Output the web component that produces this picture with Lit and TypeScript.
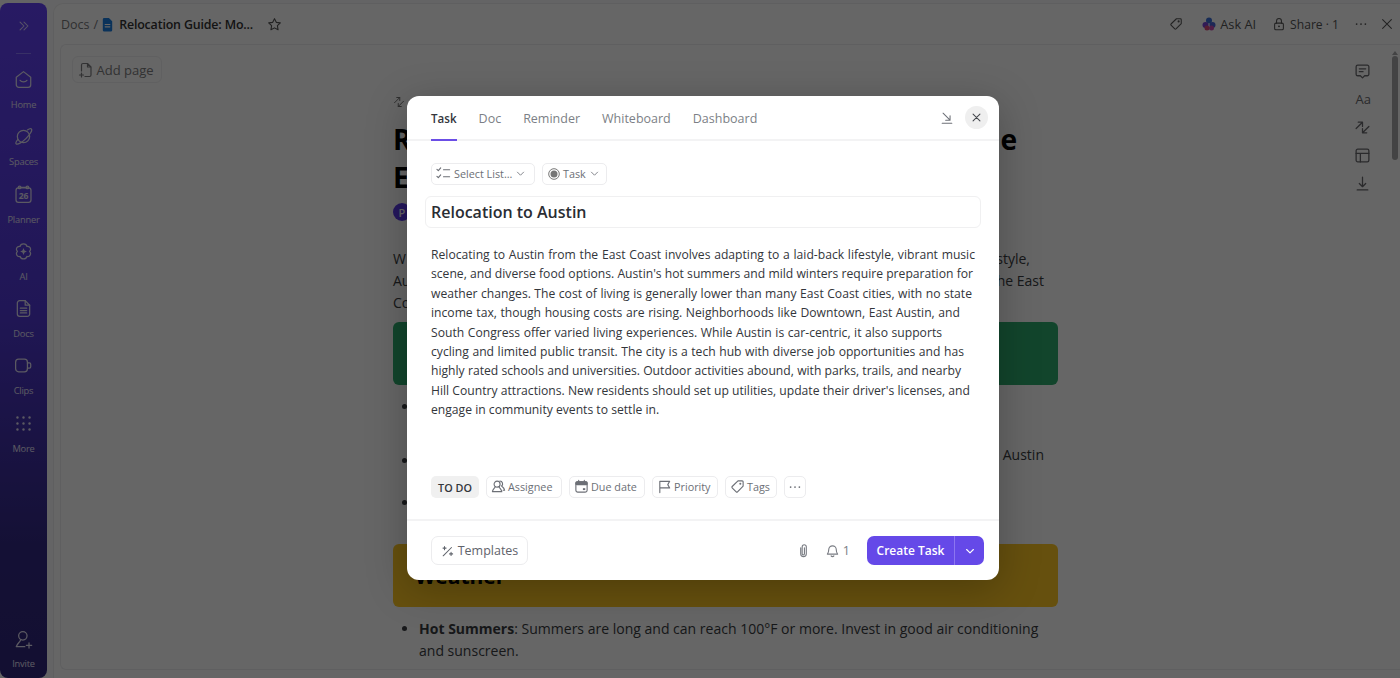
import { LitElement, html, css, svg } from "lit";
import { customElement } from "lit/decorators.js";
import { styleMap } from "lit/directives/style-map.js";

const ic = (body: unknown, size = 16, cls = "") => html`<svg class="ic ${cls}" width=${size} height=${size} viewBox="0 0 16 16" fill="none" stroke="currentColor" stroke-width="1.2" stroke-linecap="round" stroke-linejoin="round">${body}</svg>`;

const navIcons: Record<string, unknown> = {
  Home: svg`<path d="M2.500 6.200 8 2l5.500 4.200v5.800a2 2 0 0 1-2 2h-7a2 2 0 0 1-2-2z" stroke-width=".95"/><path d="M5.400 8.600c1.200 1.600 4 1.600 5.200 0" stroke-width=".95"/>`,
  Spaces: svg`<g stroke-width=".95"><circle cx="8" cy="8" r="4.700"/><path d="M3.800 10.200C2.400 11.800 1.800 13 2.400 13.600c1 1 4.400-1 7.600-4.200s5-6.200 4-7.200c-.5-.5-1.600-.2-3 .8"/></g>`,
  Planner: svg`<g stroke-width=".95"><rect x="2.300" y="3" width="11.400" height="11" rx="1.800"/><circle cx="5" cy="2.600" r="1"/><circle cx="11" cy="2.600" r="1"/><path d="M6 2.600h4"/></g><text x="8" y="11.700" text-anchor="middle" font-size="6.500" font-weight="700" fill="currentColor" stroke="none" font-family="Open Sans, sans-serif">26</text>`,
  AI: svg`<path stroke-width=".95" d="M8 2.200c1.500 0 2.400.9 2.600 1.900 1.500-.2 2.800.8 2.800 2.200 0 .7-.4 1.200-.8 1.600.4.400.8 1 .8 1.700 0 1.500-1.300 2.400-2.800 2.200-.3 1-1.100 1.900-2.600 1.900s-2.300-.9-2.600-1.900c-1.500.2-2.800-.7-2.800-2.200 0-.7.4-1.300.8-1.700-.4-.4-.8-.9-.8-1.600 0-1.400 1.300-2.400 2.800-2.200.2-1 1.100-1.900 2.600-1.900z"/><path fill="currentColor" stroke="none" d="M8 5.400 8.800 7.200 10.600 8 8.800 8.800 8 10.600 7.200 8.800 5.400 8 7.200 7.200z"/>`,
  Docs: svg`<g stroke-width=".95"><path d="M3.300 3.800a1.800 1.800 0 0 1 1.800-1.800h4.200l3.400 3.500v6.700a1.800 1.800 0 0 1-1.800 1.800H5.100a1.800 1.800 0 0 1-1.800-1.800z"/><path d="M9.300 2v3.500h3.400M5.600 7.800h4.800M5.600 9.600h4.800M5.600 11.400h4.800"/></g>`,
  Clips: svg`<g stroke-width=".95"><rect x="2" y="3.200" width="9" height="9.600" rx="2.300"/><path d="M11 6h1.500a1 1 0 0 1 1 1v2a1 1 0 0 1-1 1H11"/></g>`,
  More: svg`<g fill="currentColor" stroke="none">${[3.400, 8, 12.600].flatMap((x) => [3.400, 8, 12.600].map((y) => svg`<circle cx=${x} cy=${y} r=".9"/>`))}</g>`,
};

const nav = ["Home", "Spaces", "Planner", "AI", "Docs", "Clips", "More"];

const descriptionLines: [string, number][] = [
  ["Relocating to Austin from the East Coast involves adapting to a laid-back lifestyle, vibrant music", 544],
  ["scene, and diverse food options. Austin's hot summers and mild winters require preparation for", 542],
  ["weather changes. The cost of living is generally lower than many East Coast cities, with no state", 541],
  ["income tax, though housing costs are rising. Neighborhoods like Downtown, East Austin, and", 529],
  ["South Congress offer varied living experiences. While Austin is car-centric, it also supports", 511],
  ["cycling and limited public transit. The city is a tech hub with diverse job opportunities and has", 533],
  ["highly rated schools and universities. Outdoor activities abound, with parks, trails, and nearby", 530],
  ["Hill Country attractions. New residents should set up utilities, update their driver's licenses, and", 539],
  ["engage in community events to settle in.", 232],
];

@customElement("app-root")
export class AppRoot extends LitElement {
  static styles = css`
    :host { display: block; position: relative; width: 1400px; height: 678px; overflow: hidden; background: #fff; font-family: "Open Sans", "Noto Sans", sans-serif; color: #1f2126; }
    .ic { display: block; flex: none; }
    .shell { display: flex; height: 678px; padding-top: 3px; box-sizing: border-box; background: #fbfbfc; }
    .sidebar { width: 47px; flex: none; border-radius: 8px; background: linear-gradient(180deg, #6443f8 0%, #5239d6 45%, #342a86 80%, #30267c 100%); color: #fff; display: flex; flex-direction: column; align-items: center; }
    .chev { height: 46px; display: flex; align-items: center; color: #d8d0ff; }
    .sep { width: 15px; height: 1px; background: #8d78ff; margin: 4px 0 9px; }
    .nav { flex: none; height: 57.3px; display: flex; flex-direction: column; align-items: center; gap: 9px; color: #e4e0f5; }
    .nav .ic { margin-top: 6px; }
    .nav span { font-size: 9.300px; line-height: 12px; letter-spacing: -0.2px; font-weight: 500; }
    .grow { flex: 1; }
    .invite { height: 42px; margin-bottom: 7px; gap: 8px; }
    .invite .ic { margin-top: 0; }

    .main { flex: 1; margin-left: 6px; border: 1px solid #eeeef0; border-right: none; border-bottom: none; border-radius: 10px 0 0 0; display: flex; flex-direction: column; min-width: 0; background: #fff; }
    .topbar { height: 40px; flex: none; display: flex; align-items: center; padding: 0 6px 0 7px; font-size: 12.500px; color: #77787c; gap: 4px; }
    .crumb-title { color: #333; font-weight: 600; font-size: 12.400px; letter-spacing: -0.15px; }
    .doc-ico { color: #1a7ee0; margin-left: -2px; }
    .star { margin-left: 10px; color: #555; }
    .top-right { margin-left: auto; display: flex; align-items: center; color: #555; font-size: 12.800px; }
    .ask { display: flex; align-items: center; gap: 4px; margin-left: 19px; }
    .share { display: flex; align-items: center; gap: 4px; margin-left: 16px; font-size: 12.100px; }
    .dots { margin-left: 15px; }
    .xclose { margin-left: 12px; }
    .frame { flex: 1; margin-left: 6px; border: 1px solid #eeeef0; border-radius: 6px 0 0 6px; border-right: none; margin-bottom: 8px; display: flex; min-height: 0; }
    .left-col { width: 332px; flex: none; padding: 11px; box-sizing: border-box; }
    .addpage { width: 90px; height: 27px; box-sizing: border-box; border: 1px solid #f0f0f2; border-radius: 6px; display: flex; align-items: center; justify-content: center; gap: 2px; font-size: 13px; font-weight: 500; color: #7d7d80; padding-right: 2px; }
    .doc { width: 665px; flex: none; padding-top: 51px; }
    .mini { color: #666; height: 12px; }
    .h1 { font-size: 28.200px; line-height: 38px; font-weight: 700; color: #000; margin-top: 12px; white-space: nowrap; }
    .meta { height: 19px; margin-top: 7px; }
    .av { width: 18px; height: 18px; border-radius: 50%; background: #5b3ae8; color: #fff; font-size: 11px; font-weight: 600; display: flex; align-items: center; justify-content: center; }
    .para { margin-top: 26px; font-size: 14px; line-height: 21.800px; color: #3a3d42; }
    .ln { display: flex; justify-content: space-between; white-space: nowrap; width: 651px; height: 21.800px; }
    .in { margin-right: 14px; }
    .block { height: 63px; border-radius: 6px; margin-top: 9px; display: flex; align-items: flex-end; padding: 0 22px 18px; box-sizing: border-box; font-size: 21px; line-height: 26px; font-weight: 700; color: #000; }
    .green { background: #2eac6e; }
    .yellow { background: #ffc824; margin-top: 15px; }
    .bl { margin: 0; padding: 0 0 0 26px; font-size: 14.030px; line-height: 21.800px; color: #3a3d42; }
    .bl .ln { width: 625px; }
    .bl li { min-height: 48px; padding-top: 11px; box-sizing: border-box; }
    .bl li.hot { margin-top: 11px; padding-top: 0; }
    .rail { width: 332px; flex: none; display: flex; flex-direction: column; align-items: flex-end; padding: 18px 19px 0 0; box-sizing: border-box; color: #6a6a6e; gap: 11px; }
    .rail .aa { font-size: 13px; height: 17px; line-height: 17px; }
    .scroll { position: absolute; right: 2px; top: 56px; width: 6px; height: 104px; border-radius: 3px; background: #a8a8aa; }
    .scroll-up { position: absolute; right: 2px; top: 48px; width: 0; height: 0; border: 3px solid transparent; border-bottom: 4px solid #a8a8aa; }

    .overlay { position: absolute; inset: 0; background: rgba(0,0,0,.6); }
    .modal { position: absolute; left: 407px; top: 96px; width: 592px; height: 484px; background: #fff; border-radius: 12px; display: flex; flex-direction: column; box-shadow: 0 8px 40px rgba(0,0,0,.25); color: #2a2e34; }
    .tabs { height: 45px; flex: none; box-sizing: border-box; border-bottom: 2px solid #f3f3f4; padding: 0 11px 0 24px; display: flex; align-items: center; gap: 22px; font-size: 12.500px; font-weight: 500; color: #7c7f86; }
    .tab { height: 45px; box-sizing: border-box; display: flex; align-items: center; border-bottom: 2px solid transparent; margin-bottom: -2px; padding-top: 1px; }
    .tab.on { color: #33363c; border-bottom-color: #6b4ee6; font-weight: 600; font-size: 11.600px; }
    .tab-r { margin-left: auto; display: flex; align-items: center; gap: 11px; color: #6d7077; }
    .close { width: 23px; height: 23px; border-radius: 50%; background: #efefef; display: flex; align-items: center; justify-content: center; color: #44474d; }
    .body { flex: 1; padding: 22px 18px 0 18px; display: flex; flex-direction: column; min-height: 0; }
    .chips { display: flex; gap: 7px; padding-left: 6px; }
    .chip { height: 22px; box-sizing: border-box; border: 1px solid #ececee; border-radius: 5px; display: flex; align-items: center; gap: 3px; padding: 0 5px 1px; font-size: 10.800px; font-weight: 500; color: #6c6f76; white-space: nowrap; }
    .chips .chip { padding-bottom: 1px; }
    .chips .w-select { padding-left: 4px; }
    .props .chip { padding-left: 4px; gap: 2px; }
    .w-select { width: 104px; }
    .w-task { width: 65px; }
    .title { margin-top: 11px; height: 32px; box-sizing: border-box; border: 1px solid #f0f0f1; border-radius: 6px; display: flex; align-items: center; padding: 0 0 0 5px; font-size: 16px; font-weight: 600; color: #2a2d33; }
    .desc { margin: 17px 0 0 6px; font-size: 12.150px; line-height: 19.400px; color: #33363b; }
    .dl { height: 19.400px; text-align: justify; text-align-last: justify; white-space: normal; }
    .dl.last { text-align-last: left; }
    .props { display: flex; gap: 7px; padding-left: 6px; margin-top: auto; margin-bottom: 21px; }
    .props .todo { background: #f0f0f0; border: none; color: #33363b; font-weight: 600; width: 48px; justify-content: center; padding: 0; }
    .w-as { width: 76px; } .w-du { width: 76px; } .w-pr { width: 66px; } .w-ta { width: 52px; }
    .props .w-mo { width: 22px; padding: 0; justify-content: center; }
    .foot { height: 61px; flex: none; box-sizing: border-box; border-top: 2px solid #f3f3f4; display: flex; align-items: center; padding: 0 15px 0 24px; }
    .tpl { width: 97px; height: 29px; box-sizing: border-box; border: 1px solid #ececee; border-radius: 7px; display: flex; align-items: center; justify-content: center; gap: 3px; font-size: 12.500px; font-weight: 500; color: #5f636b; }
    .foot-r { margin-left: auto; display: flex; align-items: center; color: #7a7d84; }
    .bell { display: flex; align-items: center; gap: 3px; margin-left: 14px; font-size: 12.500px; }
    .cta { margin-left: 17px; width: 117px; height: 29px; border-radius: 7px; background: #6549e8; color: #fff; display: flex; align-items: center; font-size: 12px; font-weight: 600; }
    .cta-t { width: 87px; text-align: center; border-right: 1px solid #8c76f0; line-height: 29px; height: 29px; }
    .cta-c { flex: 1; display: flex; justify-content: center; }
  `;

  render() {
    return html`
      <div class="shell">
        <aside class="sidebar">
          <div class="chev">${ic(svg`<path d="M3.500 3.500 8 8l-4.500 4.500M8 3.500 12.500 8 8 12.500"/>`, 14)}</div>
          <div class="sep"></div>
          ${nav.map((n) => html`<div class="nav">${ic(navIcons[n], 21)}<span>${n}</span></div>`)}
          <div class="grow"></div>
          <div class="nav invite">${ic(svg`<g stroke-width=".95"><circle cx="7.500" cy="5.200" r="3.200"/><path d="M5.800 8.300C5.300 10.300 3.200 10.800 2.500 13.500h6.500M12.200 10.500v4M10.200 12.500h4"/></g>`, 21)}<span>Invite</span></div>
        </aside>
        <div class="main">
          <div class="topbar">
            <span>Docs</span><span>/</span>
            ${ic(svg`<path fill="currentColor" stroke="none" d="M3 2.500A1.500 1.500 0 0 1 4.500 1h5L13 4.500V14a1.500 1.500 0 0 1-1.500 1.500h-7A1.500 1.500 0 0 1 3 14z"/><path stroke="#fff" d="M5.500 8h5M5.500 10.500h5"/>`, 15, "doc-ico")}
            <span class="crumb-title">Relocation Guide: Mo...</span>
            ${ic(svg`<path d="m8 1.800 1.900 3.900 4.300.6-3.100 3 .7 4.300L8 11.600l-3.800 2 .7-4.300-3.100-3 4.300-.6z"/>`, 15, "star")}
            <div class="top-right">
              ${ic(svg`<path d="M8.500 2H13a1 1 0 0 1 1 1v4.500L8 13.700a1 1 0 0 1-1.400 0L2.300 9.400a1 1 0 0 1 0-1.400z"/><circle cx="11" cy="5" r=".6"/>`, 14)}
              <div class="ask">
                <svg class="ic" width="14" height="14" viewBox="0 0 14 14"><circle cx="7" cy="3.500" r="3" fill="#3b6fd8"/><circle cx="3.500" cy="8" r="3" fill="#7a45d8"/><circle cx="10.500" cy="8" r="3" fill="#4a63d8"/><circle cx="5" cy="11" r="2.500" fill="#d84a7a"/><circle cx="9.500" cy="11" r="2.500" fill="#c94ab0"/></svg>
                <span>Ask AI</span>
              </div>
              <div class="share">
                ${ic(svg`<rect x="3" y="7" width="10" height="7.500" rx="1.500"/><path d="M5.200 7V4.500a2.800 2.800 0 0 1 5.600 0V7"/><circle cx="8" cy="10.700" r=".5"/>`, 14)}
                <span>Share · 1</span>
              </div>
              ${ic(svg`<g fill="currentColor" stroke="none"><circle cx="3" cy="8" r="1"/><circle cx="8" cy="8" r="1"/><circle cx="13" cy="8" r="1"/></g>`, 14, "dots")}
              ${ic(svg`<path d="m3 3 10 10M13 3 3 13"/>`, 14, "xclose")}
            </div>
          </div>
          <div class="frame">
            <div class="left-col">
              <div class="addpage">
                ${ic(svg`<path d="M3.500 9V3a1.500 1.500 0 0 1 1.500-1.500h4.500L13 5v8a1.500 1.500 0 0 1-1.500 1.500H7M9.500 1.500V5H13M3.500 11v4M1.500 13h4"/>`, 16)}
                <span>Add page</span>
              </div>
            </div>
            <div class="doc">
              <div class="mini">${ic(svg`<path d="M2 9 9 2M5 2h4v4M14 7l-7 7M11 14H7v-4"/>`, 12)}</div>
              <div class="h1">Relocation Guide: Moving to Austin from the<br />East Coast</div>
              <div class="meta"><div class="av">P</div></div>
              <div class="para">
                <div class="ln"><span>W</span><span class="in">style,</span></div>
                <div class="ln"><span>Au</span><span>he East</span></div>
                <div class="ln"><span>Co</span></div>
              </div>
              <div class="block green"></div>
              <ul class="bl">
                <li></li>
                <li><div class="ln"><span></span><span>Austin</span></div></li>
                <li></li>
              </ul>
              <div class="block yellow">Weather</div>
              <ul class="bl">
                <li class="hot"><b>Hot Summers</b>: Summers are long and can reach 100°F or more. Invest in good air conditioning and sunscreen.</li>
              </ul>
            </div>
            <div class="rail">
              ${ic(svg`<path d="M3.500 2h9A1.500 1.500 0 0 1 14 3.500v7a1.500 1.500 0 0 1-1.500 1.500H10l-2 2-2-2H3.500A1.500 1.500 0 0 1 2 10.500v-7A1.500 1.500 0 0 1 3.500 2zM5 5.500h6M5 8.200h3.500"/>`, 17)}
              <span class="aa">Aa</span>
              ${ic(svg`<path d="M2 9 8 3M4 3h4v4M14 7l-6 6M12 13H8V9"/>`, 17)}
              ${ic(svg`<rect x="2" y="2" width="12" height="12" rx="1.500"/><path d="M2 6h12M6 6v8"/>`, 17)}
              ${ic(svg`<path d="M8 2v8.500M5 8l3 3 3-3M3 14h10"/>`, 17)}
            </div>
          </div>
        </div>
      </div>
      <div class="scroll-up"></div>
      <div class="scroll"></div>
      <div class="overlay"></div>
      <div class="modal">
        <div class="tabs">
          <div class="tab on">Task</div><div class="tab">Doc</div><div class="tab">Reminder</div><div class="tab">Whiteboard</div><div class="tab">Dashboard</div>
          <div class="tab-r">
            ${ic(svg`<path d="M3.500 2.500l8 8M11.500 5.500v5h-5M2.500 14h11"/>`, 14)}
            <div class="close">${ic(svg`<path stroke-width="1.500" d="m3 3 10 10M13 3 3 13"/>`, 11)}</div>
          </div>
        </div>
        <div class="body">
          <div class="chips">
            <div class="chip w-select">
              ${ic(svg`<path d="m1 3.500 1.500 1.500 2.500-3M1 11l1.500 1.500 2.500-3M8 4h6.500M8 11.500h6.500"/>`, 15)}
              <span>Select List...</span>
              ${ic(svg`<path d="m3.500 6 4.500 4.500L12.500 6"/>`, 11)}
            </div>
            <div class="chip w-task">
              <svg class="ic" width="12" height="12" viewBox="0 0 12 12"><circle cx="6" cy="6" r="5.300" fill="none" stroke="#777" stroke-width="1"/><circle cx="6" cy="6" r="3.500" fill="#777"/></svg>
              <span>Task</span>
              ${ic(svg`<path d="m3.500 6 4.500 4.500L12.500 6"/>`, 11)}
            </div>
          </div>
          <div class="title">Relocation to Austin</div>
          <div class="desc">${descriptionLines.map(([l, w], i) => html`<div class="dl ${i === descriptionLines.length - 1 ? "last" : ""}" style=${styleMap({ width: `${w}px` })}>${l}</div>`)}</div>
          <div class="props">
            <div class="chip todo">TO DO</div>
            <div class="chip w-as">${ic(svg`<circle cx="6.500" cy="5.500" r="3.200"/><path d="M4.500 8.200c-.5 1.800-2.500 2.300-3 5.300h10c-.5-3-2.500-3.500-3-5.300M9.500 2.200a3 3 0 0 1 1.800 5.300c.8 1 2.700 1.500 3.200 4.500H13"/>`, 15)}<span>Assignee</span></div>
            <div class="chip w-du">${ic(svg`<rect x="2" y="3" width="12" height="11" rx="2"/><path d="M5 1.500V3M11 1.500V3"/><rect x="2" y="3" width="12" height="3" rx="1" fill="currentColor"/><rect x="9.500" y="9.800" width="2.500" height="2" fill="currentColor" stroke="none"/>`, 15)}<span>Due date</span></div>
            <div class="chip w-pr">${ic(svg`<path d="M3 14.500V2.500h10.500l-2 3.500 2 3.500H3"/>`, 15)}<span>Priority</span></div>
            <div class="chip w-ta">${ic(svg`<path d="M8.500 2H13a1 1 0 0 1 1 1v4.500L8 13.700a1 1 0 0 1-1.400 0L2.300 9.400a1 1 0 0 1 0-1.400z"/><circle cx="11" cy="5" r=".5"/>`, 15)}<span>Tags</span></div>
            <div class="chip w-mo">${ic(svg`<g fill="currentColor" stroke="none"><circle cx="3" cy="8" r="1"/><circle cx="8" cy="8" r="1"/><circle cx="13" cy="8" r="1"/></g>`, 14)}</div>
          </div>
        </div>
        <div class="foot">
          <div class="tpl">${ic(svg`<path d="M2.500 13.500 12 4M4 3v3.500M2.300 4.700h3.500M11.500 9.500v3.500M9.800 11.300h3.500"/>`, 14)}<span>Templates</span></div>
          <div class="foot-r">
            ${ic(svg`<path d="M5 5v6.500a3 3 0 0 0 6 0V4a2.200 2.200 0 0 0-4.400 0v7.500a1.200 1.200 0 0 0 2.400 0V5"/>`, 15)}
            <div class="bell">${ic(svg`<path d="M2.500 11.800c1-1 1.500-2 1.500-4.800a4 4 0 0 1 8 0c0 2.800.5 3.800 1.500 4.800zM6.500 13.800c.7 1 2.300 1 3 0"/>`, 15)}<span>1</span></div>
            <div class="cta"><div class="cta-t">Create Task</div><div class="cta-c">${ic(svg`<path stroke-width="1.500" d="m3.500 6 4.500 4.500L12.500 6"/>`, 12)}</div></div>
          </div>
        </div>
      </div>
    `;
  }
}
